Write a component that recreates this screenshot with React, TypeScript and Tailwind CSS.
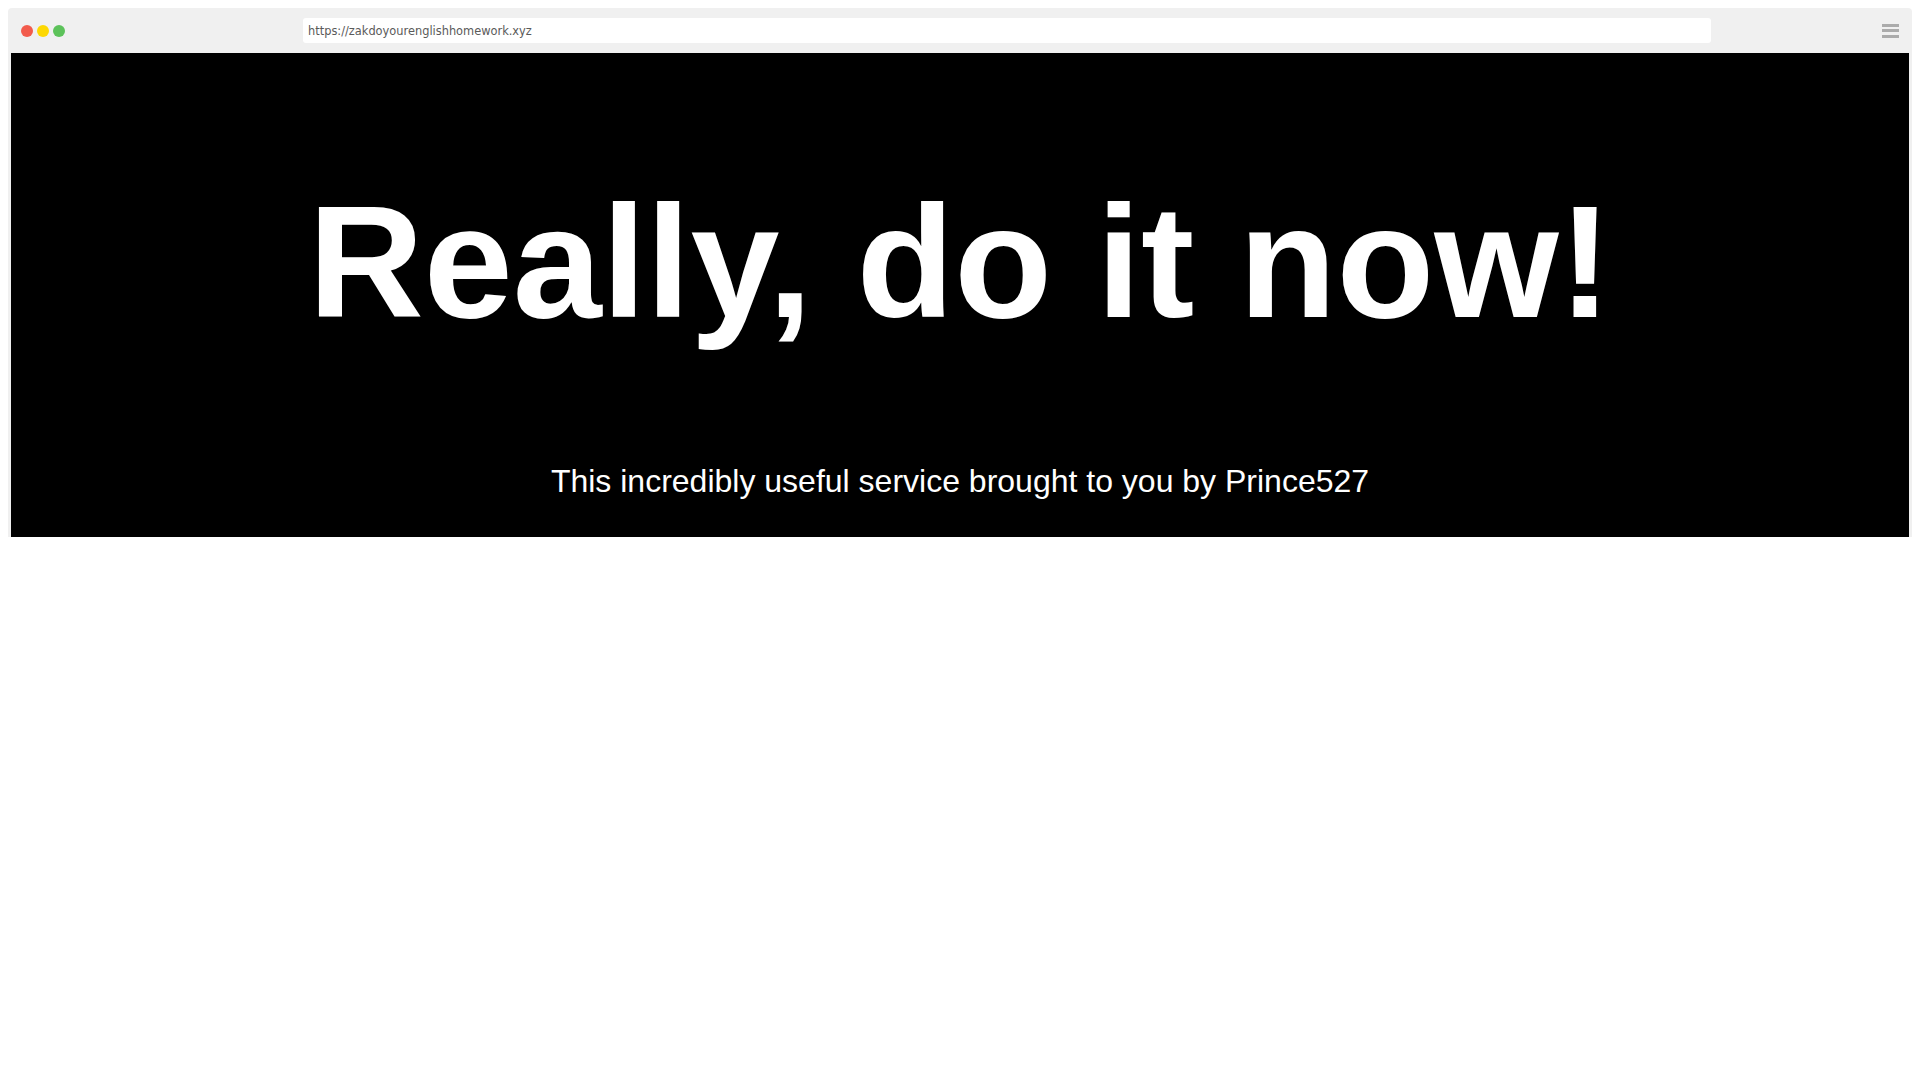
import React from "react";

// --- Barra del navegador ---
function BrowserBar() {
  return (
    <div className="flex h-[45px] items-center">
      <div className="flex items-center gap-[4px] pl-[13px]">
        <span className="block h-[12px] w-[12px] rounded-full bg-[#f25b4c]" />
        <span className="block h-[12px] w-[12px] rounded-full bg-[#fdd802]" />
        <span className="block h-[12px] w-[12px] rounded-full bg-[#5cc25a]" />
      </div>
      <div className="ml-[238px] flex h-[25px] w-[1408px] items-center rounded-[3px] bg-white pl-[5px] pt-[3px]">
        <span className="font-['DejaVu_Sans',sans-serif] text-[11.4px] text-[#5a5a5a]">
          https://zakdoyourenglishhomework.xyz
        </span>
      </div>
      <div className="ml-auto mr-[13px] flex w-[17px] flex-col gap-[2.5px]">
        <span className="block h-[3px] w-full bg-[#ababab]" />
        <span className="block h-[3px] w-full bg-[#ababab]" />
        <span className="block h-[3px] w-full bg-[#ababab]" />
      </div>
    </div>
  );
}

export default function App() {
  return (
    <div className="min-h-screen bg-white p-2">
      <div className="rounded-t-[4px] bg-[#f0f0f0]">
        <BrowserBar />
        <div className="mx-[3px] mb-[3px] flex flex-col items-center bg-black pb-[40px] pt-[129px] font-['Liberation_Sans',Arial,sans-serif] text-white">
          <h1 className="text-[160px] font-bold leading-none">Really, do it now!</h1>
          <p className="mt-[123px] text-[32px] leading-none">
            This incredibly useful service brought to you by Prince527
          </p>
        </div>
      </div>
    </div>
  );
}
